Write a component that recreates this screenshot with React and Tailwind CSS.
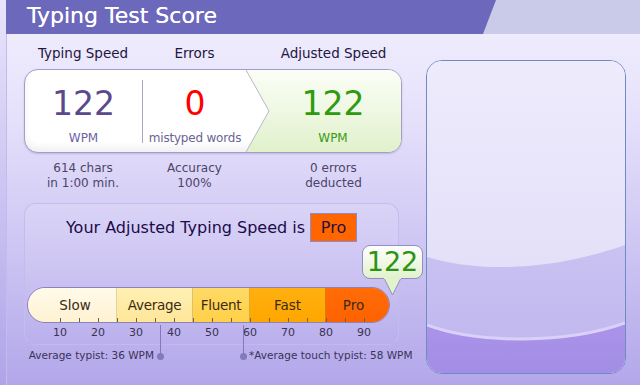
export default function App() {
  const ticks = [];
  for (let n = 10; n <= 90; n += 5) ticks.push(n);
  const nums = [10, 20, 30, 40, 50, 60, 70, 80, 90];
  return (
    <div className="w-[640px] h-[385px] overflow-hidden flex font-['DejaVu_Sans',sans-serif] bg-[linear-gradient(180deg,#f2f0fe_0%,#e6e1fb_30%,#cdc5f3_65%,#b3a7ea_100%)]">
      <div className="w-[6px] shrink-0 bg-[linear-gradient(180deg,#e8e4fb,#b0a4e9)]" />
      <div className="flex-1 flex flex-col">
        <div className="h-[34px] shrink-0 bg-[#c9cbe9] flex">
          <div className="w-[490px] h-full bg-[#6c69bc] [clip-path:polygon(0_0,100%_0,calc(100%-13px)_100%,0_100%)] pl-[21px] text-white text-[22px] leading-[31px] [text-shadow:0_0_0.4px_#fff]">
            Typing Test Score
          </div>
        </div>
        <div className="flex-1 flex border-l border-[#c3baee]">
          <div className="w-[419px] shrink-0 pl-[17px] pt-[11px]">
            <div className="grid grid-cols-[118px_105px_155px] text-[13.5px] leading-[16px] text-[#231542] text-center">
              <div>Typing Speed</div>
              <div>Errors</div>
              <div className="pl-[18px]">Adjusted Speed</div>
            </div>
            <div className="mt-[8px] w-[378px] h-[84px] rounded-[14px] border border-[#a39fc4] bg-white relative overflow-hidden flex shadow-[inset_0_-5px_6px_rgba(60,50,110,0.07),0_1px_2px_rgba(60,50,120,0.2)]">
              <div className="absolute inset-0 bg-[linear-gradient(180deg,#fbfdf6_0%,#eef8e2_50%,#e0f1cb_100%)] [clip-path:polygon(221px_0,100%_0,100%_100%,221px_100%,244px_41px)]" />
              <svg className="absolute inset-0" width="376" height="82" viewBox="0 0 376 82">
                <polyline points="221,0 244,41 221,82" fill="none" stroke="#b9b7c8" strokeWidth="1" />
              </svg>
              <div className="w-[117px] flex flex-col items-center pt-[17px] relative">
                <div className="text-[33px] leading-[34px] text-[#5a4a8c]">122</div>
                <div className="mt-[10px] text-[12px] leading-[14px] text-[#6f5fa6]">WPM</div>
              </div>
              <div className="w-px h-[63px] self-center bg-[#a9a6bd]" />
              <div className="w-[104px] flex flex-col items-center pt-[17px] relative">
                <div className="text-[33px] leading-[34px] text-[#ff0000]">0</div>
                <div className="mt-[10px] text-[12px] leading-[14px] text-[#6a6492] tracking-[-0.2px] whitespace-nowrap">mistyped words</div>
              </div>
              <div className="flex-1 flex flex-col items-center pt-[17px] pl-[18px] relative">
                <div className="text-[33px] leading-[34px] text-[#2e9a10]">122</div>
                <div className="mt-[10px] text-[12px] leading-[14px] text-[#3b9a12]">WPM</div>
              </div>
            </div>
            <div className="mt-[8px] grid grid-cols-[118px_105px_155px] text-[12px] leading-[15px] text-[#4c4468] text-center">
              <div>614 chars<br />in 1:00 min.</div>
              <div>Accuracy<br />100%</div>
              <div className="pl-[18px]">0 errors<br />deducted</div>
            </div>
            <div className="mt-[12px] w-[375px] rounded-[12px] border border-[#c4bcec] border-b-transparent bg-[linear-gradient(180deg,rgba(255,255,255,0.12),rgba(255,255,255,0))] pb-[5px]">
              <div className="pt-[9px] flex justify-center items-center gap-[5px]">
                <span className="text-[16px] text-[#1c0b4a]">Your Adjusted Typing Speed is</span>
                <span className="w-[47px] h-[29px] border border-[#8b8bd0] bg-[#ff6600] flex items-center justify-center text-[16px] text-[#2a0f3a]">Pro</span>
              </div>
              <div className="mt-[45px] ml-[2px] relative w-[363px]">
                <div className="w-[363px] h-[36px] rounded-full border border-[#8c83bb] overflow-hidden flex text-[13.5px] text-[#3b2a12] shadow-[inset_0_-3px_4px_rgba(0,0,0,0.08)]">
                  <div className="w-[89px] pl-[6px] flex items-center justify-center bg-[linear-gradient(180deg,#fffaea,#fff2d2)] border-r border-[#e4d3a0]">Slow</div>
                  <div className="w-[76px] flex items-center justify-center bg-[linear-gradient(180deg,#fff0b4,#ffe698)] border-r border-[#e0c070] tracking-[-0.3px]">Average</div>
                  <div className="w-[57px] flex items-center justify-center bg-[linear-gradient(180deg,#ffda66,#ffd048)] border-r border-[#e0aa30] tracking-[-0.3px]">Fluent</div>
                  <div className="w-[76px] flex items-center justify-center bg-[linear-gradient(180deg,#ffb010,#ffa600)] border-r border-[#e07a00]">Fast</div>
                  <div className="flex-1 pr-[8px] flex items-center justify-center bg-[linear-gradient(180deg,#ff6c08,#fe6200)]">Pro</div>
                </div>
                <svg className="absolute left-0 top-0 pointer-events-none" width="363" height="36" viewBox="0 0 363 36">
                  {ticks.map((n) => (
                    <line key={n} x1={3.8 * n - 5 + 0.5} x2={3.8 * n - 5 + 0.5} y1="31" y2="35" stroke="#6e6050" strokeWidth="1" />
                  ))}
                </svg>
                <div className="absolute left-[335px] top-[-42px] w-[61px] h-[34px]">
                  <svg className="absolute left-[21px] top-[32px]" width="19" height="19" viewBox="0 0 19 19">
                    <path d="M0.5 0 L9.5 18 L18.5 0" fill="#e1f2cd" stroke="#958dc0" strokeWidth="1" />
                  </svg>
                  <div className="absolute inset-0 rounded-[8px] border border-[#958dc0] bg-[linear-gradient(180deg,#ffffff,#e1f2cd)] flex items-center justify-center text-[27px] leading-[30px] text-[#2d9312]">122</div>
                  <div className="absolute left-[22px] top-[32px] w-[17px] h-[2px] bg-[#e1f2cd]" />
                </div>
                <div className="flex ml-[14px] mt-[3px] text-[11px] leading-[13px] text-[#3a3252]">
                  {nums.map((n) => (
                    <div key={n} className="w-[38px] text-center">{n}</div>
                  ))}
                </div>
              </div>
            </div>
            <div className="mt-[4px] flex items-center h-[14px] text-[10.5px] text-[#3a3358] whitespace-nowrap">
              <div className="w-[130px] text-right">Average typist: 36 WPM</div>
              <span className="ml-[3px] w-[7px] h-[7px] rounded-full bg-[#8379bd] relative">
                <span className="absolute bottom-[3px] left-[3px] w-px h-[32px] bg-[#8379bd]" />
              </span>
              <span className="ml-[76px] w-[7px] h-[7px] rounded-full bg-[#8379bd] relative">
                <span className="absolute bottom-[3px] left-[3px] w-px h-[32px] bg-[#8379bd]" />
              </span>
              <div className="ml-[2px]">*Average touch typist: 58 WPM</div>
            </div>
          </div>
          <div className="mt-[26px] w-[200px] h-[314px] rounded-[16px] border border-[#6e8bc4] overflow-hidden relative">
            <svg className="absolute inset-0" width="198" height="312" viewBox="0 0 198 312" preserveAspectRatio="none">
              <defs>
                <linearGradient id="tg" x1="0" y1="0" x2="0" y2="1">
                  <stop offset="0" stopColor="#eeebfc" />
                  <stop offset="1" stopColor="#dfdaf7" />
                </linearGradient>
                <linearGradient id="bg2" x1="0" y1="0" x2="0" y2="1">
                  <stop offset="0" stopColor="#cac2f1" />
                  <stop offset="1" stopColor="#bfb5ee" />
                </linearGradient>
                <linearGradient id="bg3" x1="0" y1="0" x2="0" y2="1">
                  <stop offset="0" stopColor="#ab93e9" />
                  <stop offset="1" stopColor="#a28ee6" />
                </linearGradient>
              </defs>
              <rect x="0" y="0" width="198" height="312" fill="url(#tg)" />
              <path d="M0 196 C 50 211, 120 211, 198 184 L198 312 L0 312 Z" fill="url(#bg2)" />
              <path d="M0 264 C 50 283, 140 283, 198 262 L198 312 L0 312 Z" fill="url(#bg3)" />
              <path d="M0 264 C 50 283, 140 283, 198 262" fill="none" stroke="#d9d1f8" strokeWidth="3" />
            </svg>
          </div>
        </div>
      </div>
    </div>
  );
}
